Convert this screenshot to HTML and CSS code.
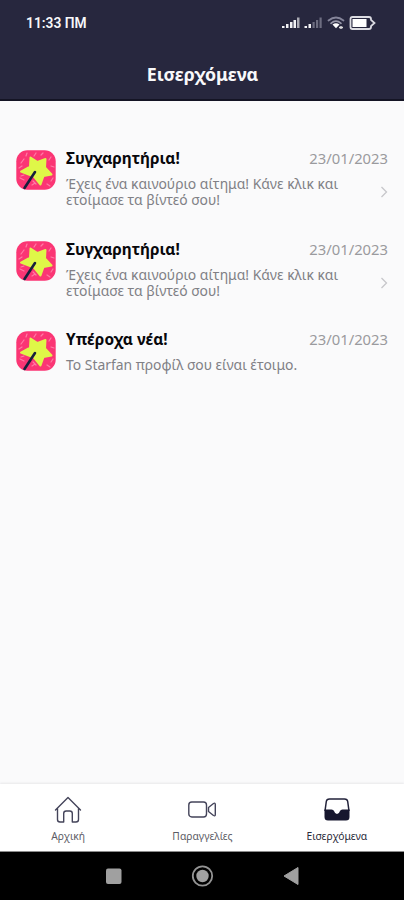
FILE: index.html
```
<!DOCTYPE html>
<html lang="el">
<head>
<meta charset="utf-8">
<title>Εισερχόμενα</title>
<link rel="stylesheet" href="styles.css">
</head>
<body>
<svg class="defs" aria-hidden="true">
  <symbol id="star" viewBox="0 0 40 40">
    <rect x=".3" y=".3" width="39.400" height="39.400" rx="11" fill="#fb3574"/>
    <path d="M5 13l3-4M10 6l1-3M18 6l2-3M25 5l2-2M33 10l2-3M35 16l3 1M35 31l2-3M31 34l3 2M16 35l3-2M4 28l4 2M3 18l3-2M8 25l-3 1M17 31l3 3" stroke="#ff7ba5" stroke-width="1.200" stroke-linecap="round"/>
    <path d="M14.500 7.500L21.500 12L29.500 9L29 17.500L35.500 24.500L27.500 26L24.500 34.500L18 26.500L5 21.500L14 16.500Z" fill="#dff748" stroke="#dff748" stroke-width="2" stroke-linejoin="round"/>
    <path d="M19 22L8.500 38" stroke="#17203c" stroke-width="2.600" stroke-linecap="round"/>
  </symbol>
  <symbol id="chevron" viewBox="0 0 8 12">
    <path d="M1.500 1L6.500 6L1.500 11" fill="none" stroke="#c6c6ca" stroke-width="1.300"/>
  </symbol>
</svg>
<div class="screen">
  <header class="header">
    <div class="status">
      <span class="time">11:33 ΠΜ</span>
      <svg class="status-icons" viewBox="0 0 96 16">
        <g fill="#f2f2f5"><rect x="1" y="10" width="2.500" height="2"/><rect x="5" y="8" width="2.500" height="4"/><rect x="9" y="6" width="2.500" height="6"/><rect x="12.500" y="4" width="2.500" height="8"/><rect x="16" y="1.500" width="2.500" height="10.500" opacity=".65"/><rect x="23.500" y="10" width="2.500" height="2"/><rect x="27.500" y="8" width="2.500" height="4"/></g>
        <g fill="#6d6d80"><rect x="31.500" y="6" width="2.200" height="6"/><rect x="35" y="4" width="2.200" height="8"/><rect x="38.500" y="1.500" width="2.200" height="10.500"/></g>
        <g fill="none" stroke-linecap="round" stroke-width="1.700"><path d="M47.500 4.500Q55-1.500 62.500 4.500" stroke="#85859a"/><path d="M50 7.300Q55 3 60 7.300" stroke="#9999aa"/></g>
        <path d="M51.500 8.500Q55 6 58.500 8.500L55 12.300Z" fill="#fff"/><path d="M58 11.500h4M60 10v3" stroke="#ddd" stroke-width="1.400"/>
        <path d="M71.500 1H88q2 0 2 2v.800l3.500 3.200L90 10.200v.800q0 2-2 2H71.500q-2 0-2-2V3q0-2 2-2Z" fill="#27273e" stroke="#dcdce2" stroke-width="1.800"/>
        <rect x="71.500" y="3" width="14" height="8" fill="#fff"/>
      </svg>
    </div>
    <h1 class="heading">Εισερχόμενα</h1>
  </header>
  <main class="list">
    <article class="item">
      <svg class="avatar"><use href="#star"/></svg>
      <div class="content">
        <div class="top"><h2 class="title">Συγχαρητήρια!</h2><time class="date">23/01/2023</time></div>
        <div class="bottom"><p class="message">Έχεις ένα καινούριο αίτημα! Κάνε κλικ και<br>ετοίμασε τα βίντεό σου!</p><svg class="chevron"><use href="#chevron"/></svg></div>
      </div>
    </article>
    <article class="item">
      <svg class="avatar"><use href="#star"/></svg>
      <div class="content">
        <div class="top"><h2 class="title">Συγχαρητήρια!</h2><time class="date">23/01/2023</time></div>
        <div class="bottom"><p class="message">Έχεις ένα καινούριο αίτημα! Κάνε κλικ και<br>ετοίμασε τα βίντεό σου!</p><svg class="chevron"><use href="#chevron"/></svg></div>
      </div>
    </article>
    <article class="item">
      <svg class="avatar"><use href="#star"/></svg>
      <div class="content">
        <div class="top"><h2 class="title">Υπέροχα νέα!</h2><time class="date">23/01/2023</time></div>
        <div class="bottom"><p class="message">Το Starfan προφίλ σου είναι έτοιμο.</p></div>
      </div>
    </article>
  </main>
  <nav class="tabs">
    <a class="tab"><svg class="tab-icon" viewBox="0 0 28 28"><path d="M1.500 14L14 1.500L26.500 14M3.500 12.500v11q0 2.500 2.500 2.500h3.700v-8.500q0-2.500 2.500-2.500h3.600q2.500 0 2.500 2.500V26H22q2.500 0 2.500-2.500v-11" fill="none" stroke="#44445a" stroke-width="1.400" stroke-linejoin="round" stroke-linecap="round"/></svg><span>Αρχική</span></a>
    <a class="tab"><svg class="tab-icon" viewBox="0 0 28 28"><g fill="none" stroke="#44445a" stroke-width="1.400" stroke-linejoin="round"><rect x=".8" y="6" width="17.700" height="15" rx="3"/><path d="M20.500 11.500L25.500 7.500Q27.300 6.500 27.300 8.500v10q0 2-1.800 1L20.500 15.500Z"/></g></svg><span>Παραγγελίες</span></a>
    <a class="tab active"><svg class="tab-icon" viewBox="0 0 28 28"><path d="M2 15L3.300 5.500Q3.700 3 6.500 3H21.500Q24.300 3 24.700 5.500L26 15" fill="#fff" stroke="#22223a" stroke-width="1.500"/><path d="M1.500 13.500H8.500Q10.500 13.500 11 15Q12 18 14 18T17 15Q17.500 13.500 19.500 13.500H26.500V21Q26.500 24.500 23 24.500H5Q1.500 24.500 1.500 21Z" fill="#17172e"/></svg><span>Εισερχόμενα</span></a>
  </nav>
  <footer class="system">
    <svg class="system-icons" viewBox="0 0 404 48"><rect x="106" y="16.500" width="15.500" height="15.500" rx="2" fill="#a0a0a0"/><circle cx="202.500" cy="24" r="9.700" fill="none" stroke="#949494" stroke-width="1.800"/><circle cx="202.500" cy="24" r="6.200" fill="#a0a0a0"/><path d="M284 24L298 15.500V32.500Z" fill="#a0a0a0" stroke="#a0a0a0" stroke-linejoin="round"/></svg>
  </footer>
</div>
</body>
</html>
```
FILE: styles.css
```
* { box-sizing: border-box; }
body { margin: 0; font-family: "Noto Sans", sans-serif; background: #fafafb; }
h1, h2, p { margin: 0; }
svg { display: block; }
.defs { position: absolute; width: 0; height: 0; }
.screen { width: 404px; height: 900px; display: flex; flex-direction: column; overflow: hidden; }
.header { height: 101px; background: #27273e; border-bottom: 2px solid #141424; color: #f8f8fa; flex: none; }
.status { height: 46px; display: flex; align-items: center; justify-content: space-between; padding: 0 19px 0 26px; }
.time { font: 600 13.800px/20px Roboto, sans-serif; }
.status-icons { width: 96px; height: 16px; margin-top: 2px; margin-right: 8px; }
.heading { text-align: center; font-size: 17.800px; line-height: 24px; font-weight: 700; padding: 16px 0 0 1px; }
.list { flex: 1; padding: 49px 16px 0 16px; }
.item { display: flex; gap: 10px; height: 90.700px; }
.avatar { width: 40px; height: 40px; flex: none; }
.content { flex: 1; }
.top { display: flex; justify-content: space-between; height: 16px; line-height: 16px; }
.title { font-size: 15.400px; font-weight: 700; line-height: 17px; color: #08080c; white-space: nowrap; }
.date { font-size: 14.800px; color: #9a9a9e; white-space: nowrap; }
.bottom { display: flex; justify-content: space-between; padding-top: 10px; }
.message { font-size: 13.900px; font-weight: 400; line-height: 16px; color: #808085; white-space: nowrap; }
.chevron { width: 8px; height: 12px; margin-top: 10px; }
.tabs { height: 68px; flex: none; background: #fff; box-shadow: 0 -1px 2px #e8e8ea; border-bottom: 1px solid #8c8c8c; display: grid; grid-template-columns: repeat(3, 1fr); padding-left: 1px; }
.tab { display: flex; flex-direction: column; align-items: center; padding-top: 12px; color: #5c5c65; font-size: 10.300px; line-height: 14px; }
.tab-icon { width: 28px; height: 28px; margin-bottom: 5px; }
.active { color: #292938; }
.system { height: 48px; flex: none; background: #000; }
.system-icons { width: 404px; height: 48px; }
```
